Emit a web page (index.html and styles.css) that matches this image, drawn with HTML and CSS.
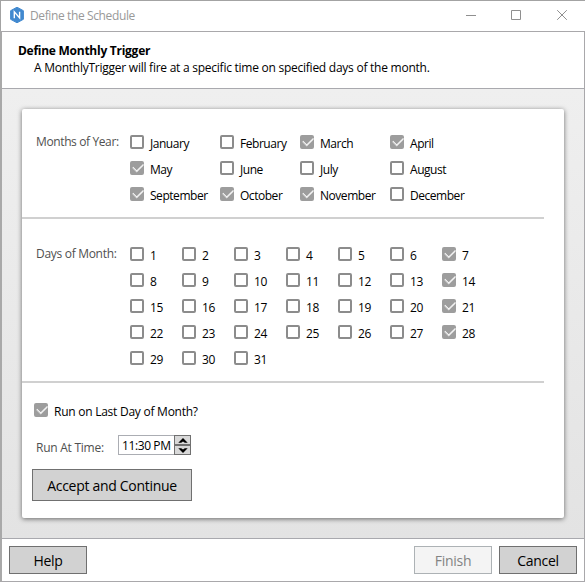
FILE: index.html
```html
<!DOCTYPE html>
<html lang="en">
<head>
<meta charset="utf-8">
<title>Define the Schedule</title>
<link rel="stylesheet" href="styles.css">
</head>
<body>
<div class="window">
  <div class="titlebar">
    <svg class="logo" width="16" height="16" viewBox="0 0 16 16"><path d="M8 0.2 14.4 3.7V12.3L8 15.8 1.6 12.3V3.7Z" fill="#4189cf" stroke="#4189cf" stroke-width="1" stroke-linejoin="round"/><path d="M5.3 11.2V4.9L10.6 11V4.7" fill="none" stroke="#fff" stroke-width="1.4"/></svg>
    <span class="title">Define the Schedule</span>
    <svg class="controls" width="104" height="12" viewBox="0 0 104 12" fill="none" stroke="#8f8f8f"><path d="M0 6.5H10M45.500 1.500H54.500V10.500H45.500ZM91.200 1.200 100.800 10.800M100.800 1.200 91.200 10.800"/></svg>
  </div>
  <div class="frame">
    <header class="header">
      <h1>Define Monthly Trigger</h1>
      <p>A MonthlyTrigger will fire at a specific time on specified days of the month.</p>
    </header>
    <main class="body">
      <div class="card">
        <section class="row months-row">
          <span class="caption months-caption">Months of Year:</span>
          <div class="months">
            <label class="check"><i></i>January</label>
            <label class="check"><i></i>February</label>
            <label class="check on"><i></i>March</label>
            <label class="check on"><i></i>April</label>
            <label class="check on"><i></i>May</label>
            <label class="check"><i></i>June</label>
            <label class="check"><i></i>July</label>
            <label class="check"><i></i>August</label>
            <label class="check on"><i></i>September</label>
            <label class="check on"><i></i>October</label>
            <label class="check on"><i></i>November</label>
            <label class="check"><i></i>December</label>
          </div>
        </section>
        <section class="row days-row">
          <span class="caption days-caption">Days of Month:</span>
          <div class="days">
            <label class="check"><i></i>1</label>
            <label class="check"><i></i>2</label>
            <label class="check"><i></i>3</label>
            <label class="check"><i></i>4</label>
            <label class="check"><i></i>5</label>
            <label class="check"><i></i>6</label>
            <label class="check on"><i></i>7</label>
            <label class="check"><i></i>8</label>
            <label class="check"><i></i>9</label>
            <label class="check"><i></i>10</label>
            <label class="check"><i></i>11</label>
            <label class="check"><i></i>12</label>
            <label class="check"><i></i>13</label>
            <label class="check on"><i></i>14</label>
            <label class="check"><i></i>15</label>
            <label class="check"><i></i>16</label>
            <label class="check"><i></i>17</label>
            <label class="check"><i></i>18</label>
            <label class="check"><i></i>19</label>
            <label class="check"><i></i>20</label>
            <label class="check on"><i></i>21</label>
            <label class="check"><i></i>22</label>
            <label class="check"><i></i>23</label>
            <label class="check"><i></i>24</label>
            <label class="check"><i></i>25</label>
            <label class="check"><i></i>26</label>
            <label class="check"><i></i>27</label>
            <label class="check on"><i></i>28</label>
            <label class="check"><i></i>29</label>
            <label class="check"><i></i>30</label>
            <label class="check"><i></i>31</label>
          </div>
        </section>
        <section class="run">
          <label class="check on last-day"><i></i>Run on Last Day of Month?</label>
          <div class="time-row">
            <span class="time-caption">Run At Time:</span>
            <div class="time">
              <span class="time-value">11:30 PM</span>
              <span class="spinner">
                <b><svg width="10" height="5" viewBox="0 0 10 5"><path d="M0.300 4.800 5 0 9.700 4.800H6.800L5 3.400 3.200 4.800Z"/></svg></b>
                <b><svg width="10" height="5" viewBox="0 0 10 5"><path d="M0.300 0.200 5 5 9.700 0.200H6.800L5 1.600 3.200 0.200Z"/></svg></b>
              </span>
            </div>
          </div>
          <button class="btn accept">Accept and Continue</button>
        </section>
      </div>
    </main>
    <footer class="footer">
      <button class="btn">Help</button>
      <span class="fill"></span>
      <button class="btn" disabled>Finish</button>
      <button class="btn">Cancel</button>
    </footer>
  </div>
</div>
</body>
</html>
```
FILE: styles.css
```css
* { box-sizing: border-box; }
body {
  margin: 0;
  font: 12px/16px "Open Sans", "Noto Sans", sans-serif;
  letter-spacing: -0.25px;
  color: #000;
  background: #fff;
}
.window {
  width: 585px;
  height: 582px;
  display: flex;
  flex-direction: column;
  overflow: hidden;
}
.titlebar {
  height: 31px;
  flex: none;
  display: flex;
  align-items: center;
  border-top: 1px solid #a3a3a3;
  border-left: 1px solid #a3a3a3;
  padding: 0 15px 2px 8px;
  color: #999;
}
.title { margin-left: 5px; padding-top: 2px; letter-spacing: -0.38px; }
.controls { margin-left: auto; }
.frame {
  flex: 1;
  display: flex;
  flex-direction: column;
  border: 1px solid #a9a8ab;
  border-left: 2px solid #a9a9a9;
}
.header {
  height: 57px;
  flex: none;
  border-bottom: 1px solid #a9a9ae;
  padding: 10px 16px 0;
}
.header h1 {
  margin: 0;
  font-size: 12px;
  line-height: 17px;
  font-weight: 700;
  letter-spacing: -0.26px;
}
.header p { margin: 0 0 0 16px; white-space: nowrap; line-height: 17px; }
.body {
  height: 449px;
  flex: none;
  padding: 20px;
  background: linear-gradient(#efefef, #e3e3e3);
}
.card {
  width: 542px;
  height: 409px;
  background: #fff;
  border-radius: 2px;
  box-shadow: 0 1px 5px rgba(0, 0, 0, .55);
}
.row {
  width: 522px;
  border-bottom: 2px solid #d0d0d0;
  display: flex;
  padding-left: 14px;
}
.months-row { height: 110px; padding-top: 26px; }
.days-row { height: 164px; padding-top: 28px; }
.caption { width: 94px; color: #505050; margin-top: -1px; white-space: nowrap; }
.months-caption { letter-spacing: -0.38px; }
.days-caption { letter-spacing: -0.3px; }
.months, .days { display: grid; grid-auto-rows: 26px; }
.months { grid-template-columns: 90px 80px 90px 90px; letter-spacing: -0.46px; }
.days { grid-template-columns: repeat(7, 52px); }
.check {
  display: flex;
  align-items: flex-start;
  gap: 6px;
  white-space: nowrap;
}
.check i {
  width: 14px;
  height: 14px;
  border: 2px solid #8c8c8c;
  border-radius: 2px;
  position: relative;
  flex: none;
}
.months .check, .days .check { line-height: 18px; }
.check.on i { background: #9d9d9d; border-color: #9d9d9d; }
.check.on i::after {
  content: "";
  position: absolute;
  left: 2.500px;
  top: -1.900px;
  width: 4.800px;
  height: 9.400px;
  border: solid #fff;
  border-width: 0 1.600px 1.600px 0;
  border-width: 0 1px 1px 0;
  box-shadow: 0.5px 0.5px 0 rgba(255, 255, 255, .7);
  transform: rotate(45deg);
}
.run { padding: 20px 10px 0; }
.last-day { padding-left: 2px; height: 32px; line-height: 18px; }
.time-row { display: flex; height: 34px; }
.time-caption { width: 86px; padding: 5px 0 0 4px; color: #505050; }
.time { width: 73px; height: 20px; display: flex; border: 1px solid #abadb3; border-right: 0; }
.time-value { width: 55px; padding-left: 3px; line-height: 20px; white-space: nowrap; letter-spacing: -0.4px; }
.spinner { width: 17px; height: 20px; margin-top: -1px; display: flex; flex-direction: column; }
.spinner b {
  height: 10px;
  border: 1px solid #707070;
  background: #d8d8d8;
  display: flex;
  align-items: center;
  justify-content: center;
}
.btn {
  width: 78px;
  height: 28px;
  border: 1px solid #707070;
  border-radius: 0;
  background: #d2d2d2;
  color: #000;
  font: inherit;
  font-size: 14px;
  letter-spacing: -0.3px;
  padding: 1px 0 0;
  white-space: nowrap;
}
.btn:disabled { background: #f4f4f4; border-color: #adb2b5; color: #838383; }
.btn.accept { display: block; width: 160px; height: 32px; }
.footer {
  flex: 1;
  border-top: 1px solid #a9a9ae;
  display: flex;
  align-items: flex-start;
  padding: 7px 7px 0;
}
.fill { flex: 1; }
.footer .btn:last-child { margin-left: 7px; }
```
